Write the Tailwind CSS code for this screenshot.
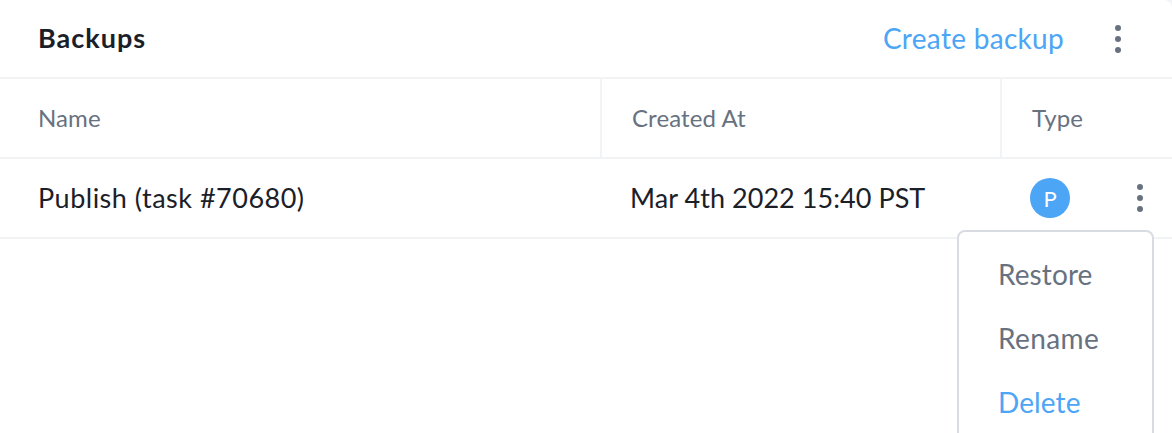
<!DOCTYPE html>
<html>
<head>
<meta charset="utf-8">
<script src="https://cdn.jsdelivr.net/npm/@tailwindcss/browser@4"></script>
</head>
<body class="bg-[#f1f3f5] overflow-hidden font-['Lato','Noto_Sans',sans-serif]">
<div class="relative w-[1172px] h-[433px] overflow-hidden bg-white rounded-tr-[8px]">
  <div class="flex items-center justify-between h-[79px] border-b-2 border-[#f1f3f5] pl-[38px] pr-[48px]">
    <div class="text-[27px] font-bold tracking-[1px] text-[#1b2028]">Backups</div>
    <div class="flex items-center gap-[48px]">
      <span class="text-[28px] tracking-[0.3px] text-[#4ca5f5] -translate-y-px">Create backup</span>
      <svg class="w-[12px] h-[30px]" viewBox="0 0 12 30"><circle cx="6" cy="4" r="3" fill="#68717f"/><circle cx="6" cy="15" r="3" fill="#68717f"/><circle cx="6" cy="26" r="3" fill="#68717f"/></svg>
    </div>
  </div>
  <div class="grid grid-cols-[602px_400px_1fr] h-[80px] border-b-2 border-[#f1f3f5] text-[24px] tracking-[0.1px] text-[#68717f]">
    <div class="flex items-center pl-[38px] border-r-2 border-[#f1f3f5]">Name</div>
    <div class="flex items-center pl-[30px] border-r-2 border-[#f1f3f5]">Created At</div>
    <div class="flex items-center pl-[30px]">Type</div>
  </div>
  <div class="grid grid-cols-[602px_400px_1fr] h-[80px] border-b-2 border-[#f1f3f5] text-[27px] text-[#1b2028]">
    <div class="flex items-center pl-[38px] tracking-[0.5px]">Publish (task #70680)</div>
    <div class="flex items-center pl-[28px] tracking-[0.05px]">Mar 4th 2022 15:40 PST</div>
    <div class="flex items-center pl-[28px] pr-[26px] justify-between">
      <div class="w-[40px] h-[40px] rounded-full bg-[#4ca5f5] text-white text-[22px] flex items-center justify-center">P</div>
      <svg class="w-[12px] h-[30px]" viewBox="0 0 12 30"><circle cx="6" cy="4" r="3" fill="#68717f"/><circle cx="6" cy="15" r="3" fill="#68717f"/><circle cx="6" cy="26" r="3" fill="#68717f"/></svg>
    </div>
  </div>
  <div class="absolute left-[957px] top-[230px] w-[197px] h-[240px] bg-white border-2 border-[#d8dce2] rounded-[8px] pl-[39px] pt-[10px] text-[28px] tracking-[0.1px] text-[#68717f]">
    <div class="h-[64px] flex items-center">Restore</div>
    <div class="h-[64px] flex items-center tracking-[0.4px]">Rename</div>
    <div class="h-[64px] flex items-center text-[#4ca5f5]">Delete</div>
  </div>
</div>
</body>
</html>
